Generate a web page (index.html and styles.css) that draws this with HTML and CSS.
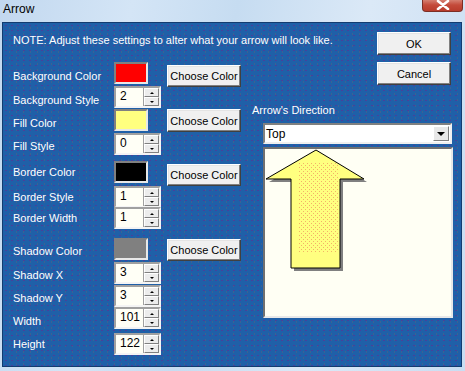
FILE: index.html
```html
<!DOCTYPE html>
<html>
<head>
  <meta charset="utf-8">
  <title>Arrow</title>
  <link rel="stylesheet" href="styles.css">
</head>
<body>
  <div class="window">
    <div class="titlebar">
      <span class="title">Arrow</span>
      <span class="close">
        <svg width="14" height="10" viewBox="0 0 14 10"><path d="M2 1 L12 9 M12 1 L2 9" stroke="#fff" stroke-width="2.6" stroke-linecap="round"/></svg>
      </span>
    </div>

    <div class="client">
      <p class="note">NOTE: Adjust these settings to alter what your arrow will look like.</p>

      <div class="actions">
        <button class="btn">OK</button>
        <button class="btn">Cancel</button>
      </div>

      <div class="form">
        <span class="label">Background Color</span>
        <span class="swatch red"></span>
        <button class="btn choose">Choose Color</button>

        <span class="label">Background Style</span>
        <span class="spin"><span class="field">2</span><span class="arrows"><i class="up"></i><i class="down"></i></span></span>

        <span class="label">Fill Color</span>
        <span class="swatch yellow"></span>
        <button class="btn choose flush">Choose Color</button>

        <span class="label lower">Fill Style</span>
        <span class="spin"><span class="field">0</span><span class="arrows"><i class="up"></i><i class="down"></i></span></span>

        <span class="label raise">Border Color</span>
        <span class="swatch black"></span>
        <button class="btn choose">Choose Color</button>

        <span class="label raise">Border Style</span>
        <span class="spin"><span class="field">1</span><span class="arrows"><i class="up"></i><i class="down"></i></span></span>

        <span class="label raise">Border Width</span>
        <span class="spin"><span class="field">1</span><span class="arrows"><i class="up"></i><i class="down"></i></span></span>

        <span class="label lower">Shadow Color</span>
        <span class="swatch gray"></span>
        <button class="btn choose near">Choose Color</button>

        <span class="label lower">Shadow X</span>
        <span class="spin"><span class="field">3</span><span class="arrows"><i class="up"></i><i class="down"></i></span></span>

        <span class="label lower">Shadow Y</span>
        <span class="spin"><span class="field">3</span><span class="arrows"><i class="up"></i><i class="down"></i></span></span>

        <span class="label">Width</span>
        <span class="spin"><span class="field">101</span><span class="arrows"><i class="up"></i><i class="down"></i></span></span>

        <span class="label raise">Height</span>
        <span class="spin"><span class="field">122</span><span class="arrows"><i class="up"></i><i class="down"></i></span></span>
      </div>

      <div class="direction">
        <span class="dir-label">Arrow's Direction</span>
        <div class="combo">
          <span class="combo-text">Top</span>
          <span class="combo-btn"><i></i></span>
        </div>
        <div class="preview">
          <svg width="186" height="167" viewBox="0 0 186 167">
            <defs>
              <pattern id="dots" width="4" height="4" patternUnits="userSpaceOnUse">
                <rect x="0" y="0" width="1" height="1" fill="#f0a060"/>
                <rect x="2" y="2" width="1" height="1" fill="#f0a060"/>
              </pattern>
              <clipPath id="shape">
                <polygon points="51,1 99,30 75,30 75,119 26,119 26,30 1,30"/>
              </clipPath>
            </defs>
            <polygon points="54,4 102,33 78,33 78,122 29,122 29,33 4,33" fill="#808080"/>
            <polygon points="51,1 99,30 75,30 75,119 26,119 26,30 1,30" fill="#ffff80" stroke="#000" stroke-width="1"/>
            <rect x="33" y="13" width="40" height="90" fill="url(#dots)" clip-path="url(#shape)" opacity="0.8"/>
          </svg>
        </div>
      </div>
    </div>
  </div>
</body>
</html>
```

FILE: styles.css
```css
* { box-sizing: border-box; }
html, body {
  margin: 0;
  padding: 0;
  width: 465px;
  height: 371px;
  overflow: hidden;
  font-family: "Liberation Sans", Arial, sans-serif;
  font-size: 11px;
}
.window {
  width: 465px;
  height: 371px;
  background: linear-gradient(100deg, #c2d8ef 0%, #d4e5f6 25%, #c6dcf1 45%, #dbe9f7 70%, #c9ddf2 100%);
  padding: 0 3px 4px 2px;
  display: flex;
  flex-direction: column;
}
.titlebar {
  height: 22px;
  display: flex;
  justify-content: space-between;
  align-items: flex-start;
  margin-left: -2px;
  margin-right: -3px;
}
.title {
  font-family: "Liberation Sans", Arial, sans-serif;
  font-size: 12px;
  line-height: 18px;
  padding-left: 3px;
  color: #000;
}
.close {
  width: 41px;
  height: 13px;
  margin-right: 2px;
  margin-top: -1px;
  background: linear-gradient(#d98a7c, #c44a3a 50%, #b83c2c);
  border: 1px solid #7c2e25;
  border-top: none;
  border-radius: 0 0 4px 4px;
  display: flex;
  align-items: center;
  justify-content: center;
}
.client {
  flex: 1;
  border: 1px solid #123c70;
  background-color: #1f60a8;
  background-image:
    radial-gradient(circle, rgba(90, 50, 150, 0.7) 0.5px, transparent 0.9px),
    radial-gradient(circle, rgba(80, 100, 130, 0.6) 0.5px, transparent 0.9px);
  background-size: 6px 5px, 7px 6px;
  background-position: 0 0, 3px 2px;
  display: grid;
  grid-template-columns: 247px 120px 91px;
  grid-template-rows: 39px 38px 1fr;
  grid-template-areas:
    "note note btns"
    "form . btns"
    "form dir dir";
  color: #fff;
}
.note {
  grid-area: note;
  margin: 0;
  padding: 11px 0 0 10px;
  line-height: 13px;
  white-space: nowrap;
}
.actions {
  grid-area: btns;
  display: flex;
  flex-direction: column;
  gap: 7px;
  padding: 9px 0 0 7px;
}
.btn {
  font-family: "Liberation Sans", Arial, sans-serif;
  font-size: 11px;
  color: #000;
  width: 74px;
  height: 23px;
  padding: 0;
  background: #f0f0f0;
  border: 1px solid;
  border-color: #fff #404040 #404040 #fff;
  box-shadow: inset -1px -1px 0 #808080, inset 1px 1px 0 #e4e4e4;
}
.form {
  grid-area: form;
  display: grid;
  grid-template-columns: 101px 53px 74px;
  grid-template-rows: 24px 23px 24px 28px 25px 21px 31px 24px 23px 22px 26px 22px;
  align-items: start;
  padding-left: 10px;
}
.label {
  grid-column: 1;
  line-height: 22px;
  padding-top: 3px;
  white-space: nowrap;
}
.label.lower { padding-top: 2px; }
.label.raise { padding-top: 0; }
.swatch {
  width: 34px;
  height: 22px;
  border: 2px solid;
  border-color: #808080 #e8e8e8 #e8e8e8 #808080;
}
.red { background: #ff0000; }
.yellow { background: #ffff80; }
.black { background: #000; }
.gray { background: #808080; }
.choose { margin-top: 3px; height: 22px; }
.choose.flush { margin-top: 0; height: 23px; }
.choose.near { margin-top: 1px; }
.spin {
  width: 47px;
  height: 22px;
  display: flex;
  border: 2px solid;
  border-color: #a0a0a0 #f4f4f4 #f4f4f4 #a0a0a0;
  background: #fffff6;
}
.field {
  flex: 1;
  color: #000;
  padding-left: 4px;
  line-height: 17px;
  font-size: 12px;
}
.arrows {
  width: 16px;
  display: flex;
  flex-direction: column;
  border-left: 1px solid #a0a0a0;
}
.arrows i {
  flex: 1;
  background: #ececec;
  border: 1px solid;
  border-color: #fff #808080 #808080 #fff;
  display: flex;
  align-items: center;
  justify-content: center;
}
.arrows i::after {
  content: "";
  border-left: 2px solid transparent;
  border-right: 2px solid transparent;
}
.arrows .up::after { border-bottom: 2px solid #000; }
.arrows .down::after { border-top: 2px solid #000; }
.direction {
  grid-area: dir;
  display: flex;
  flex-direction: column;
  align-items: flex-start;
  padding-top: 3px;
}
.dir-label {
  padding-left: 2px;
  line-height: 14px;
}
.combo {
  margin: 6px 0 0 13px;
  width: 189px;
  height: 21px;
  display: flex;
  align-items: center;
  background: #fff;
  border: 2px solid;
  border-color: #808080 #f0f0f0 #f0f0f0 #808080;
  padding-right: 1px;
}
.combo-text {
  flex: 1;
  color: #000;
  font-size: 12px;
  padding-left: 1px;
}
.combo-btn {
  width: 16px;
  height: 15px;
  background: #e8e8e8;
  border: 1px solid;
  border-color: #fff #808080 #808080 #fff;
  display: flex;
  align-items: center;
  justify-content: center;
}
.combo-btn i {
  border-left: 4px solid transparent;
  border-right: 4px solid transparent;
  border-top: 4px solid #000;
}
.preview {
  margin: 3px 0 0 13px;
  width: 190px;
  height: 171px;
  background: #fffff4;
  border: 2px solid;
  border-color: #707070 #e8e8e8 #e8e8e8 #707070;
}
.preview svg { display: block; }
```
